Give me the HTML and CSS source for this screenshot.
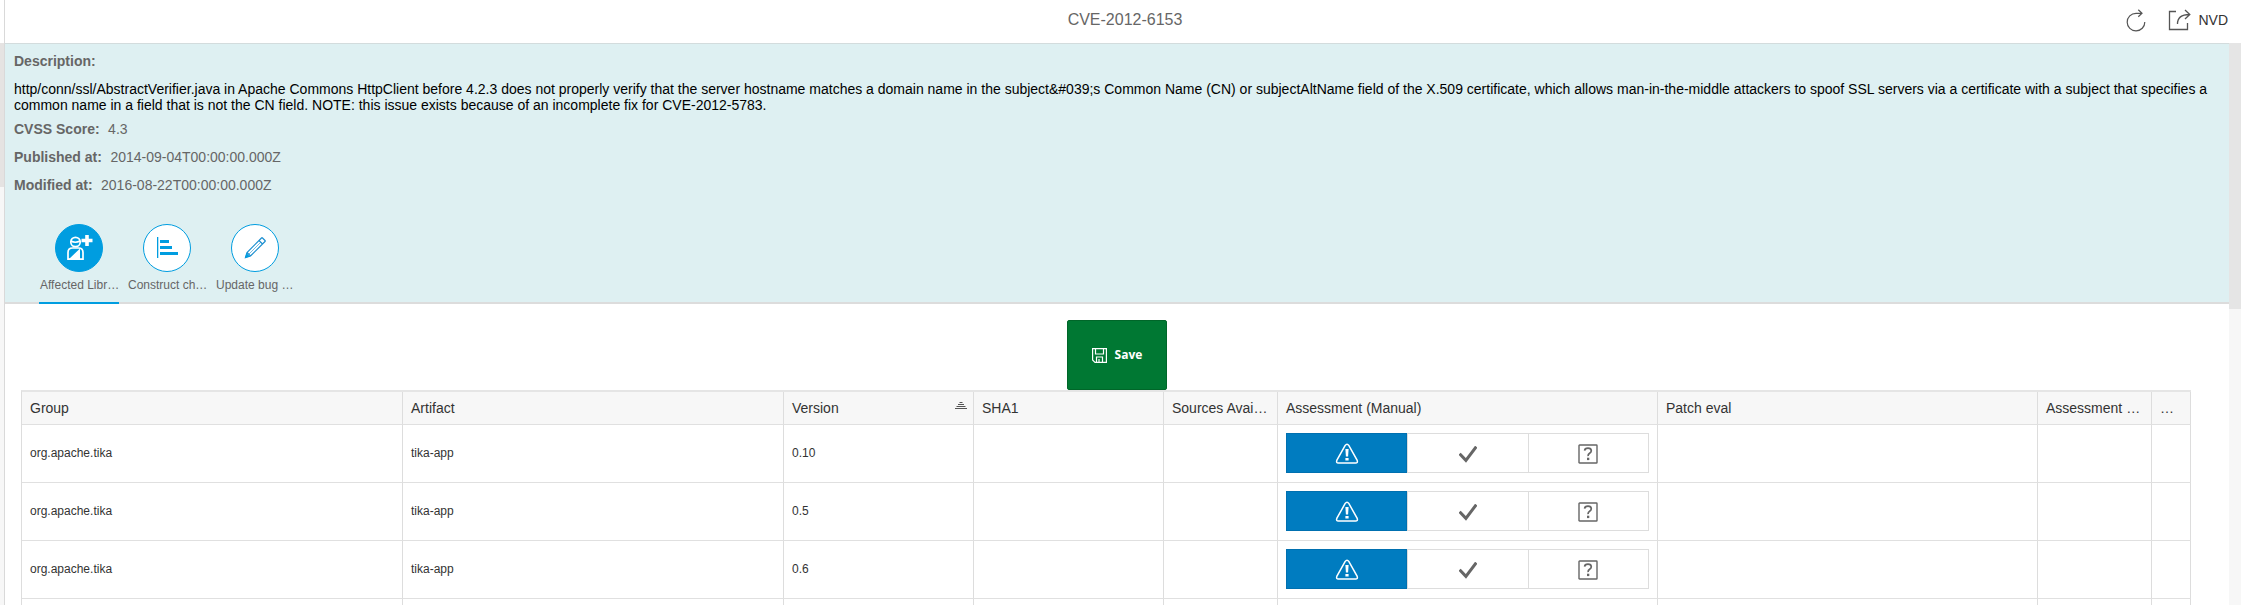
FILE: index.html
```html
<!DOCTYPE html>
<html lang="en">
<head>
<meta charset="utf-8">
<title>CVE-2012-6153</title>
<link rel="stylesheet" href="styles.css">
</head>
<body>
<svg class="defs" width="0" height="0">
  <symbol id="alert" viewBox="0 0 24 22">
    <path d="M10.2 2.4 1.8 17.4Q.9 20 3.4 20H20.6Q23.1 20 22.2 17.4L13.8 2.4Q12 0 10.2 2.4Z" fill="none" stroke="currentColor" stroke-width="1.5"/>
    <path d="M10.4 6h3.200l-.5 7.6h-2.200zM10.4 15h3.200v2.6h-3.200z" fill="currentColor"/>
  </symbol>
  <symbol id="check" viewBox="0 0 18 17">
    <path d="M1.6 8.8 6.9 14.4 16.4 1.8" fill="none" stroke="currentColor" stroke-width="3" stroke-linecap="square" stroke-linejoin="miter"/>
  </symbol>
  <symbol id="question" viewBox="0 0 20 20">
    <rect x="1" y="1" width="18" height="18" rx=".6" fill="none" stroke="currentColor" stroke-width="1.4"/>
    <path d="M6.600 6.6Q6.800 4.1 10 4.1T13.300 6.7Q13.300 8.2 11.600 9.3T10.100 12.1" fill="none" stroke="currentColor" stroke-width="1.7"/>
    <path d="M9 13.7h2.3v2.4H9z" fill="currentColor"/>
  </symbol>
</svg>
<div class="page">
  <header class="bar">
    <h1 class="title">CVE-2012-6153</h1>
    <div class="actions">
      <svg class="refresh" width="20" height="23" viewBox="0 0 20 23"><path d="M15.5 4.3H10A8.8 8.8 0 1 0 18.8 13M12.3 .8 16 4.3 12.3 7.8" fill="none" stroke="#555" stroke-width="1.2"/></svg>
      <svg class="share" width="24" height="22" viewBox="0 0 24 22"><path d="M8 2.5H1.5V20.5H19.5V14M9.5 15Q9.5 5.5 21.5 5.5M17 1 21.8 5.5 17 10" fill="none" stroke="#555" stroke-width="1.3"/></svg>
      <span class="nvd">NVD</span>
    </div>
  </header>
  <div class="body">
    <div class="gutter-left"></div>
    <main class="content">
      <section class="info">
        <div class="field"><b>Description:</b></div>
        <p class="desc">http/conn/ssl/AbstractVerifier.java in Apache Commons HttpClient before 4.2.3 does not properly verify that the server hostname matches a domain name in the subject&amp;#039;s Common Name (CN) or subjectAltName field of the X.509 certificate, which allows man-in-the-middle attackers to spoof SSL servers via a certificate with a subject that specifies a common name in a field that is not the CN field. NOTE: this issue exists because of an incomplete fix for CVE-2012-5783.</p>
        <div class="field"><b>CVSS Score:</b><span>4.3</span></div>
        <div class="field"><b>Published at:</b><span>2014-09-04T00:00:00.000Z</span></div>
        <div class="field"><b>Modified at:</b><span>2016-08-22T00:00:00.000Z</span></div>
        <nav class="tabs">
          <div class="tab active">
            <div class="circle"><svg width="48" height="48" viewBox="0 0 48 48"><g fill="none" stroke="#fff" stroke-width="1.7"><circle cx="20.5" cy="18" r="4.7"/><path d="M16 17q4 2.500 9 0M13 35.200V28.500q0-4.500 4.500-4.500h6q4.500 0 4.500 4.500v6.700z"/></g><path d="M14 35 25 24.500V35zM30.200 11h3.600v3.700h3.700v3.600h-3.700V22h-3.600v-3.700h-3.700v-3.600h3.700z" fill="#fff"/></svg></div>
            <span>Affected Libr…</span>
          </div>
          <div class="tab">
            <div class="circle"><svg width="48" height="48" viewBox="0 0 48 48" fill="#009de0"><path d="M14 13h1.300v21H14zM17 16h9v3h-9zM17 22h12v3H17zM17 28h18v3H17z"/></svg></div>
            <span>Construct ch…</span>
          </div>
          <div class="tab">
            <div class="circle"><svg width="48" height="48" viewBox="0 0 48 48"><path d="M14.500 33.500 16 28.500 30.500 14Q31 13.500 31.500 14L34 16.500Q34.500 17 34 17.500L19.500 32ZM28 16.500 31.500 20M16 28.500 19.500 32" fill="none" stroke="#1c8fd0" stroke-width="1.200"/><path d="M18 30 29.500 18.500" fill="none" stroke="#1c8fd0" stroke-width=".6"/><path d="M14 34 15.500 29 19 32.500z" fill="#009de0"/></svg></div>
            <span>Update bug …</span>
          </div>
        </nav>
      </section>
      <section class="libs">
        <button class="save"><svg width="15" height="15" viewBox="0 0 15 15" fill="none" stroke="#fff" stroke-width="1.200"><path d="M.6.6H14.400V14.400H3L.6 12zM3.500.6V6H11.500V.6M4.500 14.400V9H10.500V14.400M7 11V14"/></svg>Save</button>
        <table class="grid">
          <colgroup><col class="first"><col class="second"><col class="mid"><col class="mid"><col class="small"><col class="wide"><col class="wide"><col class="small"><col class="tiny"></colgroup>
          <thead><tr><th>Group</th><th>Artifact</th><th><div class="sorted">Version<svg width="12" height="8" viewBox="0 0 12 8"><path d="M4.500.5h3M3 2.500h6M1.500 4.500h9M0 6.500h12" stroke="#555"/></svg></div></th><th>SHA1</th><th>Sources Avai…</th><th>Assessment (Manual)</th><th>Patch eval</th><th>Assessment …</th><th>…</th></tr></thead>
          <tbody>
            <tr><td>org.apache.tika</td><td>tika-app</td><td>0.10</td><td></td><td></td><td><div class="seg"><i class="on"><svg width="24" height="22"><use href="#alert"/></svg></i><i><svg width="18" height="17"><use href="#check"/></svg></i><i><svg width="20" height="20"><use href="#question"/></svg></i></div></td><td></td><td></td><td></td></tr>
            <tr><td>org.apache.tika</td><td>tika-app</td><td>0.5</td><td></td><td></td><td><div class="seg"><i class="on"><svg width="24" height="22"><use href="#alert"/></svg></i><i><svg width="18" height="17"><use href="#check"/></svg></i><i><svg width="20" height="20"><use href="#question"/></svg></i></div></td><td></td><td></td><td></td></tr>
            <tr><td>org.apache.tika</td><td>tika-app</td><td>0.6</td><td></td><td></td><td><div class="seg"><i class="on"><svg width="24" height="22"><use href="#alert"/></svg></i><i><svg width="18" height="17"><use href="#check"/></svg></i><i><svg width="20" height="20"><use href="#question"/></svg></i></div></td><td></td><td></td><td></td></tr>
            <tr><td></td><td></td><td></td><td></td><td></td><td></td><td></td><td></td><td></td></tr>
          </tbody>
        </table>
      </section>
    </main>
    <div class="gutter-right"></div>
  </div>
</div>
</body>
</html>
```
FILE: styles.css
```css
* { box-sizing: border-box; }
body { margin: 0; background: #fff; font-family: "Liberation Sans", Arial, sans-serif; font-size: 14px; color: #333; }
svg { display: block; flex: none; }
.defs { position: absolute; }
.page { height: 605px; overflow: hidden; display: flex; flex-direction: column; }
.bar { height: 43px; flex: none; margin-left: 4px; border-left: 1px solid #d9d9d9; display: grid; grid-template-columns: 1fr auto 1fr; }
.title { grid-column: 2; margin: 0 0 0 4px; font-size: 16px; font-weight: 400; line-height: 39px; color: #666; }
.actions { display: flex; justify-content: flex-end; padding: 9px 13px 0 0; }
.share { margin-left: 22px; }
.nvd { margin-left: 6px; line-height: 22px; }
.body { flex: 1; display: flex; min-height: 0; }
.gutter-left { width: 4px; background: linear-gradient(#e5e3e2 144px, #f7f7f7 144px); }
.gutter-right { width: 12px; background: linear-gradient(#e5e5e5 266px, #f7f7f7 266px); }
.content { flex: 1; min-width: 0; border-left: 1px solid #d9d9d9; }
.info { height: 261px; background: #def0f2; border-top: 1px solid #d3dcdd; border-bottom: 2px solid #dcdcdc; padding: 3px 16px 0 9px; color: #666; }
.field { height: 28px; line-height: 29px; display: flex; gap: 8.5px; }
.desc { margin: 6px 0 2px; line-height: 16px; color: #000; }
.tabs { display: flex; gap: 8px; margin: 25px 0 0 25px; }
.tab { width: 80px; height: 80px; display: flex; flex-direction: column; align-items: center; font-size: 12px; }
.tab span { line-height: 14px; margin-top: 6px; align-self: flex-start; padding-left: 1px; white-space: nowrap; }
.tab.active { border-bottom: 2px solid #009de0; }
.circle { width: 48px; height: 48px; border: 1px solid #009de0; border-radius: 50%; background: #fff; }
.circle svg { margin: -1px; }
.active .circle { background: #009de0; }
.libs { display: flex; flex-direction: column; padding: 16px 38px 0 16px; }
.save { align-self: center; margin-left: 22px; width: 100px; height: 70px; border: 1px solid #006629; border-radius: 2px; background: #007833; color: #fff; display: flex; align-items: center; justify-content: center; gap: 8px; padding: 0; font: bold 12px/16px "Open Sans", sans-serif; }
.grid { width: 2170px; table-layout: fixed; border-collapse: separate; border-spacing: 0; border-left: 1px solid #ddd; border-top: 2px solid #e5e5e5; }
.first, .second { width: 381px; }
.wide { width: 380px; }
.mid { width: 190px; }
.small { width: 114px; }
.tiny { width: 39px; }
.grid th, .grid td { border-right: 1px solid #ddd; border-bottom: 1px solid #e0e0e0; padding: 0 8px; text-align: left; white-space: nowrap; }
.grid th { height: 33px; background: #f7f7f7; font-weight: 400; }
.grid td { height: 58px; padding-bottom: 2px; font-size: 12px; }
.sorted { display: flex; justify-content: space-between; }
.sorted svg { margin: 2px -2px 0 0; }
.seg { display: flex; width: 363px; height: 40px; border: 1px solid #ddd; }
.seg i { flex: 1; display: flex; align-items: center; justify-content: center; padding-top: 3px; color: #666; border-left: 1px solid #ddd; }
.seg .on { margin: -1px 0 -1px -1px; background: #007cc0; color: #fff; border: 1px solid #0070b0; }
```
